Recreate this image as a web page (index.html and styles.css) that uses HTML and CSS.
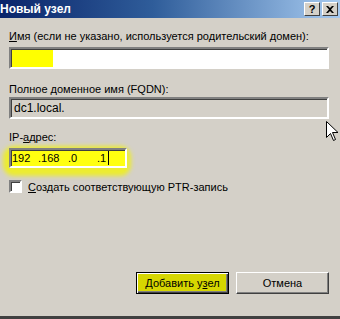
FILE: index.html
```html
<!DOCTYPE html>
<html lang="ru">

<head>
    <meta charset="UTF-8">
    <title>Новый узел</title>
    <link rel="stylesheet" href="styles.css">
</head>

<body>
    <div class="dialog">
        <div class="titlebar">
            <span class="title">Новый узел</span>
            <div class="caption-btns">
                <span class="cap-btn">?</span>
                <span class="cap-btn close">
                    <svg width="8" height="7" viewBox="0 0 8 7">
                        <path d="M0 0 L2 0 L4 2 L6 0 L8 0 L5 3.5 L8 7 L6 7 L4 5 L2 7 L0 7 L3 3.5 Z" fill="#000" />
                    </svg>
                </span>
            </div>
        </div>
        <div class="content">
            <div class="field name">
                <label><u>И</u>мя (если не указано, используется родительский домен):</label>
                <div class="edit"><span class="mark"></span></div>
            </div>
            <div class="field fqdn">
                <label>Полное доменное имя (FQDN):</label>
                <div class="edit readonly">dc1.local.</div>
            </div>
            <div class="field addr">
                <label>IP-<u>а</u>дрес:</label>
                <div class="ip-wrap">
                    <div class="edit ip">
                        <span class="seg">192</span><span class="seg">.168</span><span class="seg">.0</span><span class="seg last">.1</span><span class="caret"></span>
                    </div>
                </div>
            </div>
            <div class="check-row">
                <span class="checkbox"></span>
                <span><u>С</u>оздать соответствующую PTR-запись</span>
            </div>
            <div class="buttons">
                <button class="btn default">Добавить у<u>з</u>ел</button>
                <button class="btn">Отмена</button>
            </div>
        </div>
        <svg class="cursor" width="13" height="22" viewBox="0 0 13 22">
            <path d="M0.5 0.5 L0.5 16.5 L4.5 12.5 L7.5 19.5 L9.5 18.5 L6.5 11.5 L12 11.5 Z" fill="#fff" stroke="#000"
                stroke-width="1" />
        </svg>
    </div>
</body>

</html>
```

FILE: styles.css
```css
body {
    margin: 0;
    font-family: "Liberation Sans", Arial, sans-serif;
    font-size: 11px;
    color: #000;
}

.dialog {
    position: relative;
    width: 340px;
    height: 316px;
    background: #d4d0c8;
    border-bottom: 3px solid #404040;
    overflow: hidden;
}

.titlebar {
    height: 18px;
    display: flex;
    align-items: center;
    justify-content: space-between;
    background: linear-gradient(to right, #0a246a 0%, #2f5d9a 45%, #a6caf0 100%);
}

.title {
    color: #fff;
    font-weight: bold;
    font-size: 12px;
}

.caption-btns {
    display: flex;
    gap: 2px;
    padding-right: 2px;
}

.cap-btn {
    width: 16px;
    height: 14px;
    box-sizing: border-box;
    background: #d4d0c8;
    border: 1px solid;
    border-color: #fff #404040 #404040 #fff;
    display: flex;
    align-items: center;
    justify-content: center;
    font-weight: bold;
    font-size: 11px;
}

.content {
    padding: 12px 11px 0 9px;
    display: flex;
    flex-direction: column;
    height: 298px;
    box-sizing: border-box;
}

.field {
    display: flex;
    flex-direction: column;
}

.field label {
    line-height: 13px;
}

.name {
    gap: 4px;
    margin-bottom: 14px;
}

.fqdn {
    gap: 1px;
    margin-bottom: 12px;
}

.addr {
    gap: 4px;
    margin-bottom: 12px;
}

.edit {
    height: 22px;
    box-sizing: border-box;
    background: #fff;
    border: 2px solid;
    border-color: #808080 #fff #fff #808080;
    box-shadow: inset 1px 1px 0 #404040;
    display: flex;
    align-items: center;
    padding-left: 3px;
}

.mark {
    width: 41px;
    height: 17px;
    background: #ffff00;
    margin-left: -2px;
}

.readonly {
    background: #d4d0c8;
    font-size: 12px;
}

.ip-wrap {
    width: 118px;
    border-radius: 6px;
    box-shadow: -1px 3px 4px 5px #ecec30;
    background: #ecec30;
}

.ip {
    width: 118px;
    background: #ffff10;
    height: 20px;
    font-size: 11px;
    padding-left: 1px;
}

.seg {
    display: inline-block;
    width: 26px;
}

.seg:nth-child(2) {
    width: 30px;
}

.seg:nth-child(3) {
    width: 29px;
}

.seg.last {
    width: auto;
}

.caret {
    width: 1px;
    height: 14px;
    background: #000;
    margin-left: 2px;
}

.check-row {
    display: flex;
    align-items: center;
    gap: 6px;
}

.checkbox {
    width: 13px;
    height: 13px;
    box-sizing: border-box;
    background: #fff;
    border: 2px solid;
    border-color: #808080 #fff #fff #808080;
    box-shadow: inset 1px 1px 0 #404040;
}

.buttons {
    margin-top: auto;
    margin-bottom: 22px;
    display: flex;
    justify-content: flex-end;
    gap: 7px;
}

.btn {
    width: 93px;
    height: 22px;
    box-sizing: border-box;
    font-family: "Liberation Sans", Arial, sans-serif;
    font-size: 11px;
    background: #d4d0c8;
    border: 1px solid;
    border-color: #fff #404040 #404040 #fff;
    box-shadow: inset -1px -1px 0 #808080;
    padding: 0;
}

.btn.default {
    background: #d6d600;
    border: 1px solid #000;
    box-shadow: inset 1px 1px 0 #fff, inset -1px -1px 0 #404040, inset -2px -2px 0 #808080;
}

.cursor {
    position: absolute;
    left: 326px;
    top: 121px;
}
```
